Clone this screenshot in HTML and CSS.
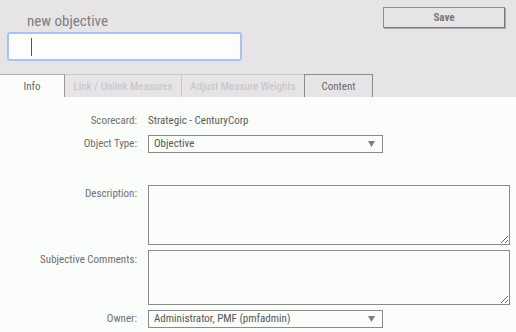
FILE: index.html
```html
<!DOCTYPE html>
<html>
<head>
<meta charset="utf-8">
<link rel="stylesheet" href="styles.css">
</head>
<body>
<div class="header">
  <div class="head-left">
    <div class="title">new objective</div>
    <div class="name-input"><span class="caret"></span></div>
  </div>
  <button class="save-btn">Save</button>
</div>
<div class="tabs">
  <div class="tab tab-info active">Info</div>
  <div class="tab tab-link disabled">Link / Unlink Measures</div>
  <div class="tab tab-adjust disabled">Adjust Measure Weights</div>
  <div class="tab tab-content">Content</div>
</div>
<div class="panel">
  <div class="row row-scorecard">
    <div class="label">Scorecard:</div>
    <div class="value">Strategic - CenturyCorp</div>
  </div>
  <div class="row row-type">
    <div class="label">Object Type:</div>
    <div class="select"><span>Objective</span><svg class="arrow" width="7" height="6" viewBox="0 0 7 6"><path d="M0 0H7L3.5 6Z" fill="#808080"/></svg></div>
  </div>
  <div class="row row-desc">
    <div class="label">Description:</div>
    <textarea class="area area-desc"></textarea>
  </div>
  <div class="row row-comments">
    <div class="label label-comments">Subjective Comments:</div>
    <textarea class="area area-comments"></textarea>
  </div>
  <div class="row row-owner">
    <div class="label">Owner:</div>
    <div class="select"><span>Administrator, PMF (pmfadmin)</span><svg class="arrow" width="7" height="6" viewBox="0 0 7 6"><path d="M0 0H7L3.5 6Z" fill="#808080"/></svg></div>
  </div>
</div>
</body>
</html>
```
FILE: styles.css
```css
html, body {
  margin: 0;
  padding: 0;
}
body {
  width: 516px;
  height: 332px;
  overflow: hidden;
  background: #fbfdfb;
  font-family: Roboto, "Liberation Sans", sans-serif;
  font-size: 11px;
  font-stretch: 85%;
  color: #666;
}
.header {
  background: #e6e4e6;
  display: flex;
  justify-content: space-between;
  align-items: flex-start;
  height: 74px;
}
.head-left {
  padding-left: 7px;
  padding-top: 12px;
}
.title {
  margin-left: 20px;
  font-size: 15px;
  line-height: 18px;
  font-stretch: 87%;
  color: #7e7e7e;
}
.name-input {
  margin-top: 2px;
  width: 235px;
  height: 29px;
  box-sizing: border-box;
  border: 2px solid #a5c4f2;
  border-radius: 3px;
  background: #fdfdfd;
  display: flex;
  align-items: flex-start;
  padding: 4px 0 0 22px;
}
.caret {
  width: 1px;
  height: 18px;
  background: #555;
}
.save-btn {
  margin: 7px 11px 0 0;
  width: 122px;
  height: 21px;
  box-sizing: border-box;
  border: 1px solid #8f8f8f;
  border-right-color: #7c7c7c;
  border-bottom-color: #7c7c7c;
  box-shadow: 1px 1px 0 #a9a9a9;
  background: #e6e4e6;
  font-family: Roboto, sans-serif;
  font-size: 11px;
  font-stretch: 85%;
  font-weight: bold;
  color: #7a7a7a;
  padding: 0;
}
.tabs {
  display: flex;
  background: #e6e4e6;
  height: 23px;
}
.tab {
  box-sizing: border-box;
  height: 23px;
  line-height: 23px;
  text-align: center;
  border-top: 1px solid #bdbdbd;
  border-right: 1px solid #c8c8c8;
}
.tab-info {
  width: 65px;
  background: #fbfdfb;
  border-top-color: #b0b0b0;
  border-right-color: #9a9a9a;
  color: #6a6a6a;
}
.tab-link {
  width: 117px;
}
.tab-adjust {
  width: 122px;
  border-right: none;
}
.disabled {
  color: #c3c3c3;
  border-top-color: #c9c9c9;
}
.tab-content {
  width: 69px;
  border: 1px solid #8c8c8c;
  border-bottom: none;
  color: #6a6a6a;
}
.panel {
  padding-top: 15px;
}
.row {
  display: flex;
  align-items: flex-start;
}
.label {
  width: 137px;
  margin-right: 11px;
  text-align: right;
  line-height: 18px;
  color: #6e6e6e;
  white-space: nowrap;
}
.value {
  line-height: 18px;
  color: #5a5a5a;
}
.row-type, .row-comments, .row-owner {
  margin-top: 5px;
}
.row-desc {
  margin-top: 32px;
}
.label-comments {
  padding-top: 1px;
}
.select {
  width: 235px;
  height: 18px;
  box-sizing: border-box;
  border: 1px solid #8a8a8a;
  background: #fbfdfb;
  display: flex;
  align-items: center;
  justify-content: space-between;
  padding: 0 7px 0 5px;
  color: #555;
  line-height: 16px;
}
.arrow {
  display: block;
}
.area {
  display: block;
  margin: 0;
  width: 362px;
  box-sizing: border-box;
  border: 1px solid #8a8a8a;
  background: #fbfdfb;
  padding: 2px;
  font-family: Roboto, sans-serif;
  font-size: 11px;
  outline: none;
}
.area-desc {
  height: 60px;
}
.area-comments {
  height: 55px;
}
```
